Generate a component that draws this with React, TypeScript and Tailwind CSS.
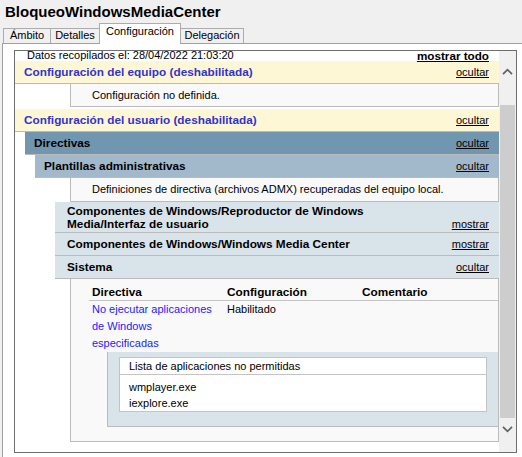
import React from 'react';

const Chevron = ({ down }: { down?: boolean }) => (
	<svg width="11" height="7" viewBox="0 0 11 7" className={down ? 'rotate-180' : ''}>
		<path d="M1 6.2 L5.5 1.6 L10 6.2" fill="none" stroke="#606060" strokeWidth="1.7" />
	</svg>
);

const Tab = ({ label, w, active }: { label: string; w: string; active?: boolean }) =>
	active ? (
		<div
			className={`${w} relative z-10 -ml-px -mb-px h-[21px] border border-b-0 border-[#acacac] bg-white pt-px text-center`}>
			{label}
		</div>
	) : (
		<div
			className={`${w} -ml-px first:ml-0 h-[15px] border border-b-0 border-[#acacac] bg-[#f0f0f0] text-center`}>
			{label}
		</div>
	);

const Hide = ({ label = 'ocultar' }: { label?: string }) => (
	<span className="underline text-black font-normal text-[11px]">{label}</span>
);

export default function App() {
	return (
		<div className="w-[522px] h-[457px] overflow-hidden bg-[#f0f0f0] font-['Liberation_Sans',Arial,sans-serif] text-black text-[11px] leading-[13px]">
			<div className="h-[23px] pl-[5px] pt-[4px] text-[15px] font-bold leading-[16px]">
				BloqueoWindowsMediaCenter
			</div>
			<div className="flex items-end h-[20px] pl-[3px]">
				<Tab label="Ámbito" w="w-[48px]" />
				<Tab label="Detalles" w="w-[50px]" />
				<Tab label="Configuración" w="w-[82px]" active />
				<Tab label="Delegación" w="w-[64px]" />
			</div>
			<div className="ml-[2px] h-[414px] border-t border-l border-[#a0a0a0] bg-white pt-[6px]">
				<div className="ml-[11px] w-[503px] h-[403px] border border-[#6e6e6e] flex">
					<div className="w-[484px] h-[401px] flex flex-col">
						{/* la vista está desplazada: la primera línea queda pegada al borde */}
						<div className="relative z-10 h-[10px] shrink-0 flex justify-between items-start pl-[12px] pr-[10px] leading-[9px]">
							<span>Datos recopilados el: 28/04/2022 21:03:20</span>
							<span className="font-bold underline text-[11.7px]">mostrar todo</span>
						</div>

						<div className="h-[23px] shrink-0 flex items-center justify-between bg-[#fef7d6] border-b border-[#bbbbbb] pl-[9px] pr-[10px]">
							<span className="font-bold text-[#3333cc] text-[11.8px]">
								Configuración del equipo (deshabilitada)
							</span>
							<Hide />
						</div>
						<div className="ml-[55px] h-[23px] shrink-0 flex items-center bg-[#f9f9f9] border-x border-b border-[#bbbbbb] pl-[21px]">
							Configuración no definida.
						</div>

						<div className="mt-[2px] h-[23px] shrink-0 flex items-center justify-between bg-[#fef7d6] border-b border-[#bbbbbb] pl-[9px] pr-[10px]">
							<span className="font-bold text-[#3333cc] text-[11.8px]">
								Configuración del usuario (deshabilitada)
							</span>
							<Hide />
						</div>
						<div className="ml-[10px] h-[23px] shrink-0 flex items-center justify-between bg-[#7096b0] border-b border-[#bbbbbb] pl-[9px] pr-[10px]">
							<span className="font-bold text-[11.8px]">Directivas</span>
							<Hide />
						</div>
						<div className="ml-[20px] h-[23px] shrink-0 flex items-center justify-between bg-[#a2b9cc] border-b border-[#bbbbbb] pl-[9px] pr-[10px]">
							<span className="font-bold text-[11.8px]">Plantillas administrativas</span>
							<Hide />
						</div>
						<div className="ml-[55px] h-[24px] shrink-0 flex items-center bg-[#f9f9f9] border-x border-b border-[#bbbbbb] pl-[21px]">
							Definiciones de directiva (archivos ADMX) recuperadas del equipo local.
						</div>

						<div className="ml-[40px] h-[31px] shrink-0 flex items-end justify-between bg-[#d9e3ea] border-b border-[#bbbbbb] pl-[12px] pr-[10px] pt-[3px] pb-px">
							<span className="w-[310px] self-start font-bold text-[11.8px] leading-[13px]">
								Componentes de Windows/Reproductor de Windows Media/Interfaz de usuario
							</span>
							<Hide label="mostrar" />
						</div>
						<div className="ml-[40px] h-[23px] shrink-0 flex items-center justify-between bg-[#d9e3ea] border-b border-[#bbbbbb] pl-[12px] pr-[10px]">
							<span className="font-bold text-[11.8px]">Componentes de Windows/Windows Media Center</span>
							<Hide label="mostrar" />
						</div>
						<div className="ml-[40px] h-[23px] shrink-0 flex items-center justify-between bg-[#d9e3ea] border-b border-[#bbbbbb] pl-[12px] pr-[10px]">
							<span className="font-bold text-[11.8px]">Sistema</span>
							<Hide />
						</div>

						<div className="ml-[55px] h-[163px] shrink-0 flex flex-col bg-[#f9f9f9] border-x border-b border-[#bbbbbb]">
							<div className="ml-[18px] grid grid-cols-[135px_135px_1fr] pt-[5px] leading-[16px] border-b border-[#c4c4c4] font-bold text-[11.8px]">
								<span className="pl-[3px]">Directiva</span>
								<span className="pl-[3px]">Configuración</span>
								<span className="pl-[3px]">Comentario</span>
							</div>
							<div className="ml-[18px] grid grid-cols-[135px_135px_1fr] leading-[17px]">
								<span className="pl-[3px] pr-[4px] text-[#2323f5]">
									No ejecutar aplicaciones de Windows especificadas
								</span>
								<span className="pl-[3px]">Habilitado</span>
								<span />
							</div>
							<div className="ml-[36px] bg-[#d9e3ea] border-l border-b border-[#bbbbbb] pt-[5px] pb-[14px] px-[11px]">
								<div className="bg-white border border-[#c4c4c4]">
									<div className="leading-[16px] border-b border-[#c4c4c4] pl-[9px]">
										Lista de aplicaciones no permitidas
									</div>
									<div className="pt-[4px] leading-[16px] pl-[9px]">
										<div>wmplayer.exe</div>
										<div>iexplore.exe</div>
									</div>
								</div>
							</div>
						</div>
					</div>

					<div className="w-[17px] bg-[#f0f0f0] flex flex-col items-center">
						<div className="mt-[17px]">
							<Chevron />
						</div>
						<div className="mt-[30px] h-[313px] self-stretch mx-px bg-[#cdcdcd]" />
						<div className="mt-[8px]">
							<Chevron down />
						</div>
					</div>
				</div>
			</div>
		</div>
	);
}
